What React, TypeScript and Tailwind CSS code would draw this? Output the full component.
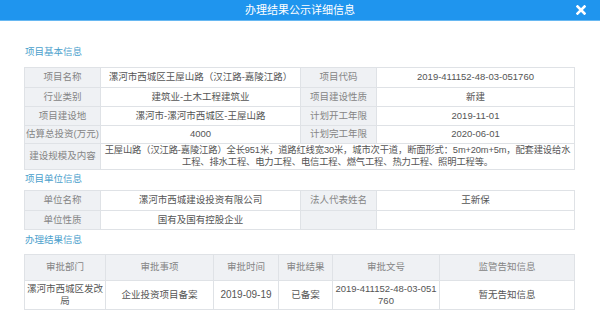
import type { ReactNode } from 'react'

const label = 'bg-[#eff1f4] text-[#858585] border border-[#dfe2e6] text-center font-normal p-0'
const value = 'bg-white text-[#555] border border-[#dfe2e6] text-center p-0'

function SectionTitle({ children, className = '' }: { children: ReactNode; className?: string }) {
  return <div className={`pl-[25px] text-[9.5px] leading-[12px] text-[#4aa0cc] ${className}`}>{children}</div>
}

export default function App() {
  return (
    <div className="w-[600px] h-[323px] bg-white overflow-hidden font-['Liberation_Sans','Noto_Sans_CJK_SC',sans-serif]">
      <div className="h-[21px] bg-[#1f95ee] border-b border-[#67b8f2] flex items-center justify-center relative">
        <span className="text-white text-[11px] leading-none">办理结果公示详细信息</span>
        <svg className="absolute right-[14px] top-[5px]" width="10" height="10" viewBox="0 0 10 10">
          <path d="M1.5 1.5 L8.5 8.5 M8.5 1.5 L1.5 8.5" stroke="#fff" strokeWidth="2.6" strokeLinecap="square" />
        </svg>
      </div>

      <SectionTitle className="mt-[25px]">项目基本信息</SectionTitle>
      <table className="ml-[24px] mt-[9px] w-[550px] table-fixed border-collapse text-[9.5px] leading-[12px]">
        <colgroup>
          <col className="w-[76px]" />
          <col className="w-[200px]" />
          <col className="w-[76px]" />
          <col className="w-[198px]" />
        </colgroup>
        <tbody>
          <tr className="h-[19.5px]">
            <td className={label}>项目名称</td>
            <td className={value}>漯河市西城区王屋山路（汉江路-嘉陵江路）</td>
            <td className={label}>项目代码</td>
            <td className={value}>2019-411152-48-03-051760</td>
          </tr>
          <tr className="h-[19px]">
            <td className={label}>行业类别</td>
            <td className={value}>建筑业-土木工程建筑业</td>
            <td className={label}>项目建设性质</td>
            <td className={value}>新建</td>
          </tr>
          <tr className="h-[19px]">
            <td className={label}>项目建设地</td>
            <td className={value}>漯河市-漯河市西城区-王屋山路</td>
            <td className={label}>计划开工年限</td>
            <td className={value}>2019-11-01</td>
          </tr>
          <tr className="h-[18px]">
            <td className={label}>估算总投资(万元)</td>
            <td className={value}>4000</td>
            <td className={label}>计划完工年限</td>
            <td className={value}>2020-06-01</td>
          </tr>
          <tr className="h-[26px]">
            <td className={label}>建设规模及内容</td>
            <td colSpan={3} className={`${value} whitespace-nowrap text-[9.3px] tracking-[-0.15px]`}>
              王屋山路（汉江路-嘉陵江路）全长951米，道路红线宽30米，城市次干道，断面形式：5m+20m+5m，配套建设给水
              <br />
              工程、排水工程、电力工程、电信工程、燃气工程、热力工程、照明工程等。
            </td>
          </tr>
        </tbody>
      </table>

      <SectionTitle className="mt-[3px]">项目单位信息</SectionTitle>
      <table className="ml-[24px] mt-[5px] w-[550px] table-fixed border-collapse text-[9.5px] leading-[12px]">
        <colgroup>
          <col className="w-[76px]" />
          <col className="w-[200px]" />
          <col className="w-[76px]" />
          <col className="w-[198px]" />
        </colgroup>
        <tbody>
          <tr className="h-[20px]">
            <td className={label}>单位名称</td>
            <td className={value}>漯河市西城建设投资有限公司</td>
            <td className={label}>法人代表姓名</td>
            <td className={value}>王新保</td>
          </tr>
          <tr className="h-[19px]">
            <td className={label}>单位性质</td>
            <td className={value}>国有及国有控股企业</td>
            <td className={label}></td>
            <td className={value}></td>
          </tr>
        </tbody>
      </table>

      <SectionTitle className="mt-[4px]">办理结果信息</SectionTitle>
      <table className="ml-[24px] mt-[8px] w-[550px] table-fixed border-collapse text-[9.5px] leading-[12px]">
        <colgroup>
          <col className="w-[81px]" />
          <col className="w-[108px]" />
          <col className="w-[65px]" />
          <col className="w-[54px]" />
          <col className="w-[107px]" />
          <col className="w-[135px]" />
        </colgroup>
        <tbody>
          <tr className="h-[26px]">
            <td className={label}>审批部门</td>
            <td className={label}>审批事项</td>
            <td className={label}>审批时间</td>
            <td className={label}>审批结果</td>
            <td className={label}>审批文号</td>
            <td className={label}>监管告知信息</td>
          </tr>
          <tr className="h-[29px]">
            <td className={`${value} px-[2px]`}>漯河市西城区发改局</td>
            <td className={value}>企业投资项目备案</td>
            <td className={`${value} text-[10px]`}>2019-09-19</td>
            <td className={value}>已备案</td>
            <td className={`${value} break-all`}>2019-411152-48-03-051760</td>
            <td className={value}>暂无告知信息</td>
          </tr>
        </tbody>
      </table>
    </div>
  )
}
